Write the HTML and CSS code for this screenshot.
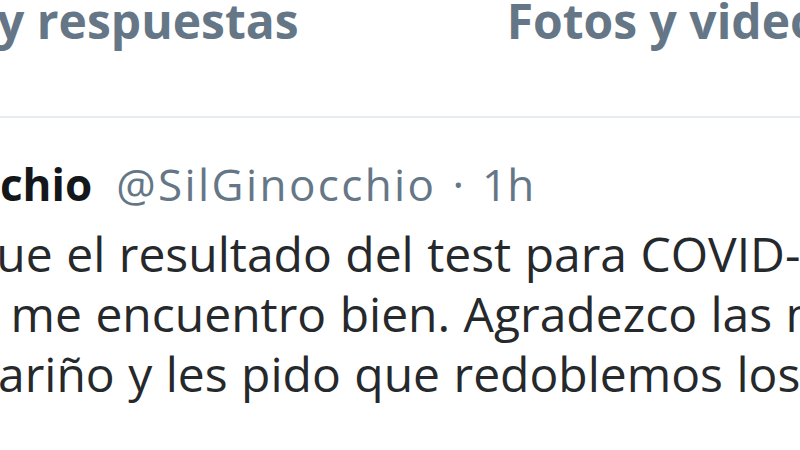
FILE: index.html
```html
<!DOCTYPE html>
<html lang="es">
<head>
    <meta charset="UTF-8">
    <meta name="viewport" content="width=device-width, initial-scale=1.0">
    <title>Tweets y respuestas</title>
    <link rel="stylesheet" href="styles.css">
</head>
<body>
    <nav class="profile-tabs">
        <span class="tab tab-replies">y respuestas</span>
        <span class="tab tab-media">Fotos y videos</span>
    </nav>

    <article class="tweet">
        <header class="tweet-head">
            <span class="tweet-name">chio</span>
            <span class="tweet-handle">@SilGinocchio</span>
            <span class="tweet-dot">·</span>
            <span class="tweet-time">1h</span>
        </header>
        <p class="tweet-text">
            <span class="line line-1">que el resultado del test para COVID-19 fue positivo</span>
            <span class="line line-2">y me encuentro bien. Agradezco las muestras de</span>
            <span class="line line-3">cariño y les pido que redoblemos los cuidados</span>
        </p>
    </article>
</body>
</html>
```

FILE: styles.css
```css
:root {
    --text-color: #14171a;
    --muted-color: #657786;
    --border-color: #e6ecf0;
}

body {
    margin: 0;
    width: 800px;
    height: 450px;
    overflow: hidden;
    background: #ffffff;
    font-family: "Open Sans", "Noto Sans", Arial, sans-serif;
    color: var(--text-color);
}

/* pestañas del perfil */
.profile-tabs {
    display: flex;
    gap: 208px;
    height: 116px;
    border-bottom: 2px solid var(--border-color);
    white-space: nowrap;
}

.tab {
    font-size: 48px;
    font-weight: 700;
    line-height: 1;
    color: var(--muted-color);
    margin-top: -3px;
}

.tab-replies {
    margin-left: -3px;
}

/* tweet */
.tweet {
    margin-left: -25px;
    white-space: nowrap;
}

.tweet-head {
    display: flex;
    align-items: baseline;
    padding-top: 40px;
    padding-left: 25px;
    font-size: 44px;
    line-height: 1.2;
}

.tweet-name {
    font-weight: 700;
    margin-right: 24px;
}

.tweet-handle {
    letter-spacing: 2.4px;
    margin-right: 16px;
}

.tweet-dot {
    margin-right: 18px;
}

.tweet-handle,
.tweet-dot,
.tweet-time {
    color: var(--muted-color);
}

.tweet-text {
    margin: 13px 0 0;
    font-size: 48px;
    line-height: 60px;
    word-spacing: 1px;
    color: #26292c;
}

.line {
    display: block;
}

/* el recorte corta cada renglón en un punto distinto */
.line-1 {
    margin-left: -8px;
}

.line-2 {
    margin-left: -2px;
}
```
